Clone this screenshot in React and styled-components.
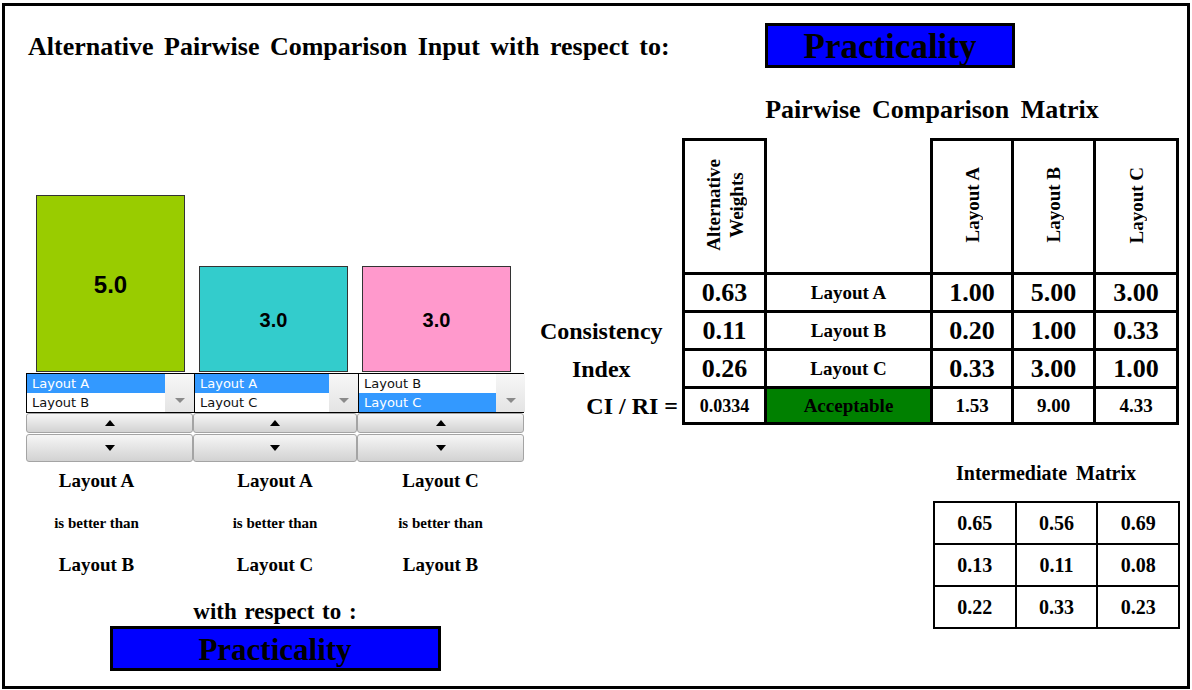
import React from "react";
import styled, { createGlobalStyle } from "styled-components";

const Global = createGlobalStyle`
  html, body { margin: 0; padding: 0; background: #fff; }
  body { font-family: "Liberation Serif", "Times New Roman", serif; color: #000; }
`;

const SERIF = `"Liberation Serif", "Times New Roman", serif`;

const Frame = styled.div`
  box-sizing: border-box;
  width: 1188px;
  height: 686px;
  margin: 3px 0 0 2px;
  border: 3px solid #000;
  display: flex;
  flex-direction: column;
`;

const Header = styled.header`
  box-sizing: border-box;
  height: 62px;
  padding: 17px 0 0 23px;
  display: grid;
  grid-template-columns: 737px 250px;
  align-items: center;
`;

const Title = styled.h1`
  margin: 0;
  font: bold 26px/1 ${SERIF};
  word-spacing: 4px;
  white-space: nowrap;
  padding-top: 3px;
`;

const CriterionBox = styled.div`
  box-sizing: border-box;
  width: ${(p) => p.$w}px;
  height: 45px;
  background: #0000ff;
  border: 3px solid #000;
  display: flex;
  align-items: center;
  justify-content: center;
  font: bold ${(p) => p.$size}px/1 ${SERIF};
  color: #000;
  padding-top: 2px;
`;

const Body = styled.div`
  flex: 1;
  display: grid;
  grid-template-columns: 525px 1fr;
`;

/* ---------- left panel ---------- */

const LeftPanel = styled.section`
  padding: 127px 0 0 21px;
  display: flex;
  flex-direction: column;
  width: 498px;
`;

const ThreeCols = styled.div`
  display: grid;
  grid-template-columns: 167px 164px 167px;
  align-items: ${(p) => p.$align || "stretch"};
  justify-items: ${(p) => p.$justify || "stretch"};
  margin-top: ${(p) => p.$mt || 0}px;
`;

const BarsRow = styled(ThreeCols)`
  height: 177px;
`;

const Bar = styled.div`
  box-sizing: border-box;
  width: 149px;
  margin-left: ${(p) => p.$ml}px;
  background: ${(p) => p.$color};
  border: 1px solid #333;
  display: flex;
  align-items: center;
  justify-content: center;
  font: bold ${(p) => p.$fs}px/1 "Liberation Sans", Arial, sans-serif;
  color: #000;
  padding-top: 2px;
`;

const ListRow = styled(ThreeCols)`
  box-sizing: border-box;
  border: 1px solid #000;
  height: 40px;
  margin-top: 1px;
`;

const ListBox = styled.div`
  display: flex;
  & + & {
    border-left: 1px solid #000;
  }
`;

const Options = styled.div`
  flex: 1;
  display: flex;
  flex-direction: column;
`;

const Option = styled.div`
  height: 19px;
  padding-left: 5px;
  font: 13px/19px "DejaVu Sans", Verdana, sans-serif;
  background: ${(p) => (p.$selected ? "#3399ff" : "#fff")};
  color: ${(p) => (p.$selected ? "#fff" : "#111")};
  white-space: nowrap;
`;

const DropArea = styled.div`
  box-sizing: border-box;
  width: 29px;
  background: linear-gradient(#f7f7f7, #e4e4e4);
  display: flex;
  align-items: flex-end;
  justify-content: center;
  padding-bottom: 9px;
`;

const SpinButton = styled.button`
  box-sizing: border-box;
  height: ${(p) => p.$h}px;
  margin: 0;
  padding: 0;
  border: 1px solid #a4a4a4;
  border-radius: 3px;
  background: linear-gradient(#f6f6f6, #d2d2d2);
  display: flex;
  align-items: center;
  justify-content: center;
`;

const LabelStack = styled.div`
  display: flex;
  flex-direction: column;
  align-items: center;
  margin-top: -2px;
  padding-right: ${(p) => p.$shift || 0}px;
`;

const LabelBig = styled.div`
  font: bold 19px/42px ${SERIF};
  white-space: nowrap;
`;

const LabelSmall = styled.div`
  font: bold 15px/42px ${SERIF};
  white-space: nowrap;
`;

const BottomBlock = styled.div`
  display: flex;
  flex-direction: column;
  align-items: center;
  margin-top: 12px;
`;

const WithRespect = styled.div`
  font: bold 23px/28px ${SERIF};
  word-spacing: 2px;
`;

/* ---------- right panel ---------- */

const RightPanel = styled.section`
  padding: 27px 8px 0 0;
  display: flex;
  flex-direction: column;
  align-items: flex-end;
`;

const MatrixTitle = styled.h2`
  margin: 0 0 13px;
  width: 494px;
  text-align: center;
  font: bold 26px/30px ${SERIF};
  word-spacing: 5px;
  white-space: nowrap;
`;

const Matrix = styled.table`
  border-collapse: collapse;
  table-layout: fixed;
  width: 638px;
`;

const Col = styled.col`
  width: ${(p) => p.$w}px;
`;

const Row = styled.tr`
  height: ${(p) => p.$h}px;
`;

const Cell = styled.td`
  box-sizing: border-box;
  padding: 0;
  border: ${(p) => (p.$bare ? "none" : `${p.$bw || 3}px solid #000`)};
  background: ${(p) => p.$bg || "transparent"};
  text-align: ${(p) => p.$align || "center"};
  padding-right: ${(p) => p.$pr || 0}px;
  vertical-align: middle;
  font: bold ${(p) => p.$size || 19}px/1 ${SERIF};
  white-space: nowrap;
`;

const VerticalHead = styled.div`
  display: inline-block;
  writing-mode: vertical-rl;
  transform: rotate(180deg);
  font: bold 19px/23px ${SERIF};
  text-align: center;
`;

const InterBlock = styled.div`
  margin-top: 35px;
  width: 246px;
  display: flex;
  flex-direction: column;
`;

const InterTitle = styled.h3`
  margin: 0 0 15px;
  padding-right: 20px;
  text-align: center;
  font: bold 20px/26px ${SERIF};
  word-spacing: 4px;
  white-space: nowrap;
`;

const InterTable = styled.table`
  border-collapse: collapse;
  table-layout: fixed;
  width: 247px;
  margin-right: -1px;
`;

/* ---------- icons ---------- */

const Tri = ({ dir = "down", color = "#000", w = 10, h = 6 }) => (
  <svg width={w} height={h} viewBox={`0 0 ${w} ${h}`} aria-hidden="true">
    <polygon
      points={dir === "up" ? `0,${h} ${w},${h} ${w / 2},0` : `0,0 ${w},0 ${w / 2},${h}`}
      fill={color}
    />
  </svg>
);

/* ---------- data ---------- */

const comparisons = [
  { value: 5, color: "#99cc00", fs: 24, ml: 10, options: ["Layout A", "Layout B"], selected: 0, better: "Layout A", worse: "Layout B", shift: 26 },
  { value: 3, color: "#33cccc", fs: 20, ml: 6, options: ["Layout A", "Layout C"], selected: 0, better: "Layout A", worse: "Layout C", shift: 0 },
  { value: 3, color: "#ff99cc", fs: 20, ml: 5, options: ["Layout B", "Layout C"], selected: 1, better: "Layout C", worse: "Layout B", shift: 0 },
];

const matrixRows = [
  { side: "", weight: "0.63", name: "Layout A", vals: ["1.00", "5.00", "3.00"] },
  { side: "Consistency", weight: "0.11", name: "Layout B", vals: ["0.20", "1.00", "0.33"] },
  { side: "Index", weight: "0.26", name: "Layout C", vals: ["0.33", "3.00", "1.00"] },
];

const intermediate = [
  ["0.65", "0.56", "0.69"],
  ["0.13", "0.11", "0.08"],
  ["0.22", "0.33", "0.23"],
];

const BAR_SCALE = 35.4;

export default function App() {
  return (
    <>
      <Global />
      <Frame>
        <Header>
          <Title>Alternative Pairwise Comparison Input with respect to:</Title>
          <CriterionBox $w={250} $size={35}>Practicality</CriterionBox>
        </Header>

        <Body>
          <LeftPanel>
            <BarsRow $align="end" $justify="start">
              {comparisons.map((c, i) => (
                <Bar key={i} $color={c.color} $fs={c.fs} $ml={c.ml} style={{ height: Math.round(c.value * BAR_SCALE) }}>
                  {c.value.toFixed(1)}
                </Bar>
              ))}
            </BarsRow>

            <ListRow>
              {comparisons.map((c, i) => (
                <ListBox key={i}>
                  <Options>
                    {c.options.map((o, j) => (
                      <Option key={o} $selected={j === c.selected}>{o}</Option>
                    ))}
                  </Options>
                  <DropArea>
                    <Tri dir="down" color="#8a8a8a" w={10} h={5} />
                  </DropArea>
                </ListBox>
              ))}
            </ListRow>

            <ThreeCols>
              {comparisons.map((c, i) => (
                <SpinButton key={i} $h={20} aria-label="increase">
                  <Tri dir="up" />
                </SpinButton>
              ))}
            </ThreeCols>
            <ThreeCols $mt={1}>
              {comparisons.map((c, i) => (
                <SpinButton key={i} $h={28} aria-label="decrease">
                  <Tri dir="down" />
                </SpinButton>
              ))}
            </ThreeCols>

            <ThreeCols>
              {comparisons.map((c, i) => (
                <LabelStack key={i} $shift={c.shift}>
                  <LabelBig>{c.better}</LabelBig>
                  <LabelSmall>is better than</LabelSmall>
                  <LabelBig>{c.worse}</LabelBig>
                </LabelStack>
              ))}
            </ThreeCols>

            <BottomBlock>
              <WithRespect>with respect to :</WithRespect>
              <CriterionBox $w={331} $size={31}>Practicality</CriterionBox>
            </BottomBlock>
          </LeftPanel>

          <RightPanel>
            <MatrixTitle>Pairwise Comparison Matrix</MatrixTitle>
            <Matrix>
              <colgroup>
                <Col $w={144} />
                <Col $w={82} />
                <Col $w={166} />
                <Col $w={81} />
                <Col $w={82} />
                <Col $w={83} />
              </colgroup>
              <tbody>
                <Row $h={134}>
                  <Cell $bare />
                  <Cell>
                    <VerticalHead>Alternative<br />Weights</VerticalHead>
                  </Cell>
                  <Cell $bare />
                  {["Layout A", "Layout B", "Layout C"].map((h) => (
                    <Cell key={h}>
                      <VerticalHead>{h}</VerticalHead>
                    </Cell>
                  ))}
                </Row>
                {matrixRows.map((r, i) => (
                  <Row key={i} $h={38}>
                    <Cell $bare $size={24} $pr={19}>{r.side}</Cell>
                    <Cell $size={26}>{r.weight}</Cell>
                    <Cell $size={19}>{r.name}</Cell>
                    {r.vals.map((v, j) => (
                      <Cell key={j} $size={26}>{v}</Cell>
                    ))}
                  </Row>
                ))}
                <Row $h={36}>
                  <Cell $bare $size={24} $align="right" $pr={4}>CI / RI =</Cell>
                  <Cell $size={18}>0.0334</Cell>
                  <Cell $size={19} $bg="#008000">Acceptable</Cell>
                  <Cell $size={19}>1.53</Cell>
                  <Cell $size={19}>9.00</Cell>
                  <Cell $size={19}>4.33</Cell>
                </Row>
              </tbody>
            </Matrix>

            <InterBlock>
              <InterTitle>Intermediate Matrix</InterTitle>
              <InterTable>
                <tbody>
                  {intermediate.map((r, i) => (
                    <Row key={i} $h={42}>
                      {r.map((v, j) => (
                        <Cell key={j} $bw={2} $size={20}>{v}</Cell>
                      ))}
                    </Row>
                  ))}
                </tbody>
              </InterTable>
            </InterBlock>
          </RightPanel>
        </Body>
      </Frame>
    </>
  );
}
